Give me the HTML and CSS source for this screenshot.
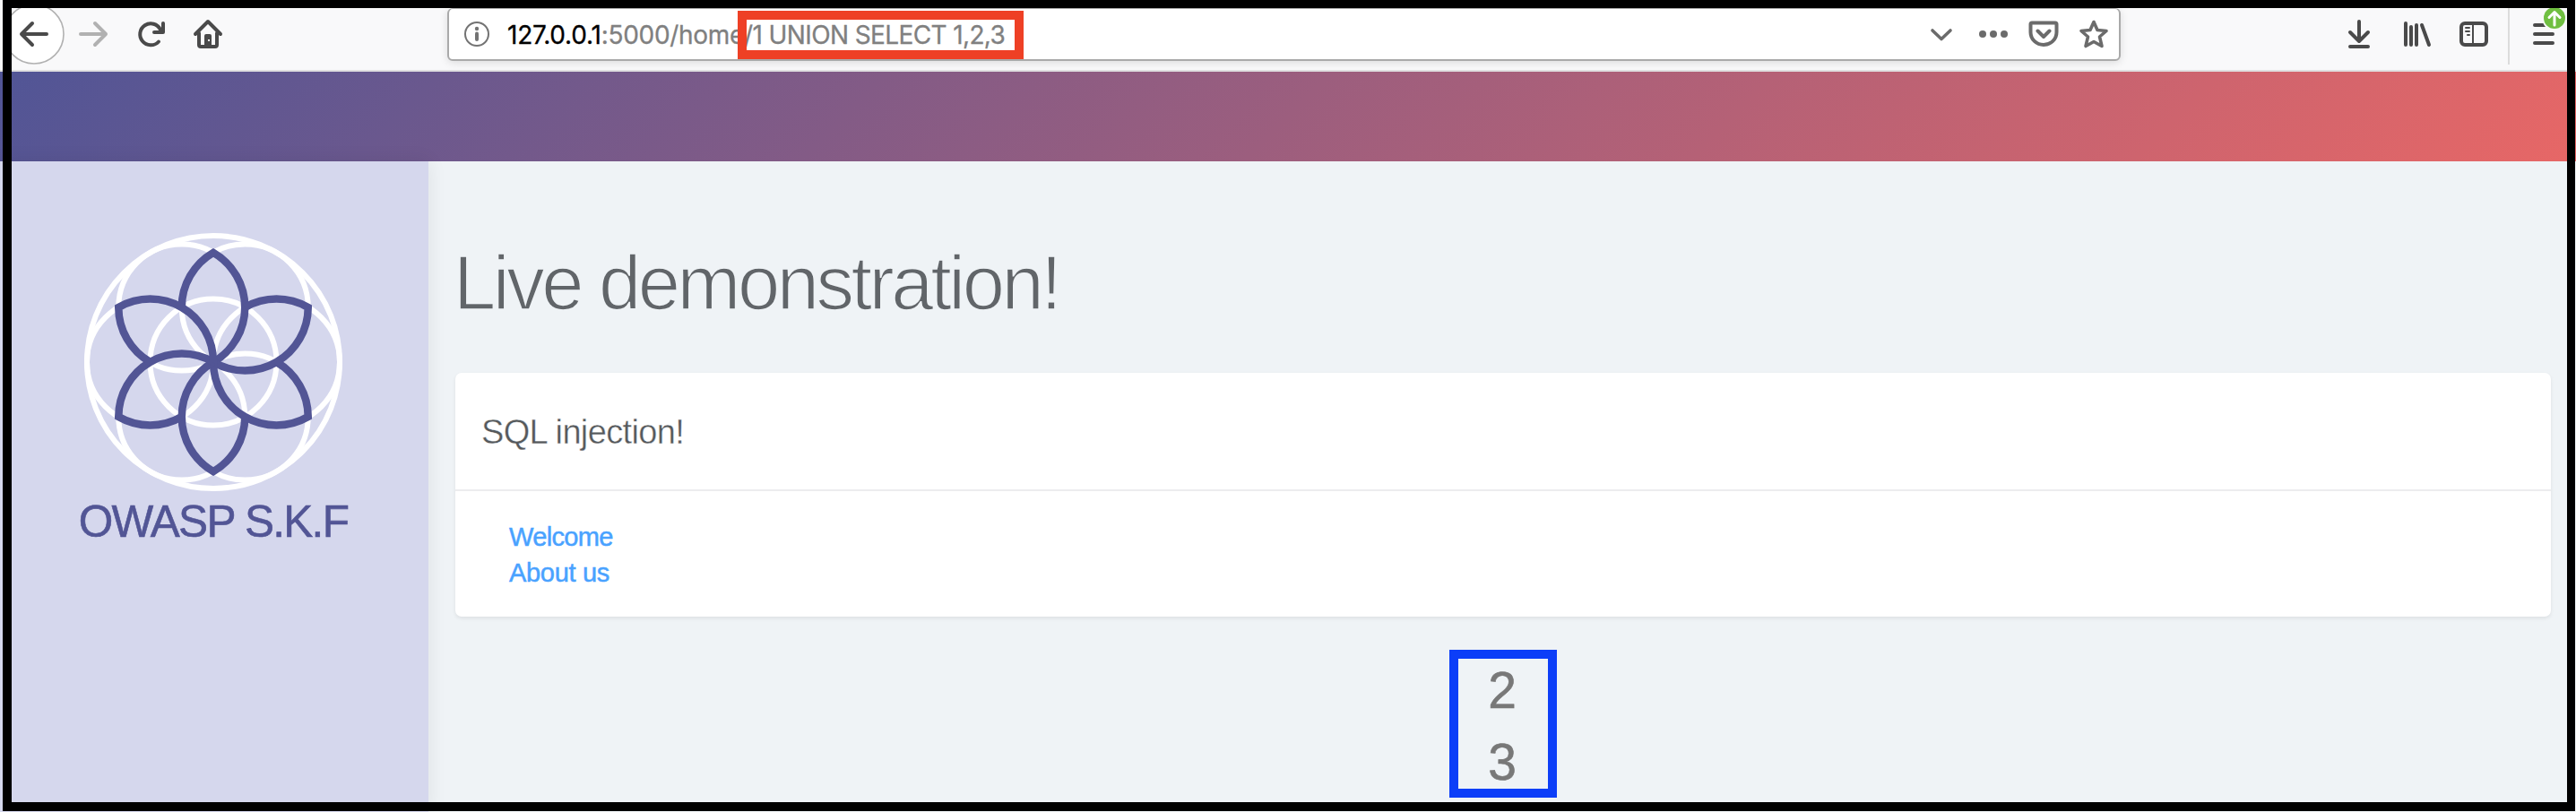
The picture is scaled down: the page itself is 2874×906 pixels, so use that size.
FILE: index.html
```html
<!DOCTYPE html>
<html lang="en">
<head>
<meta charset="utf-8">
<title>OWASP S.K.F</title>
<link rel="stylesheet" href="styles.css">
</head>
<body>
<div class="toolbar">
  <svg class="nav-icons" width="499" height="69" viewBox="0 9 499 69" fill="none" stroke-linecap="round" stroke-linejoin="round">
    <circle cx="38" cy="38" r="33" fill="#fff" stroke="#b1b1b1" stroke-width="1.6"/>
    <path d="M52 38H24M36 26L24 38L36 50" stroke="#4a4a4a" stroke-width="4"/>
    <path d="M90 38H118M106 26L118 38L106 50" stroke="#b1b1b1" stroke-width="4"/>
    <path d="M177 46.500A12 12 0 1 1 179 33M182 26V36H172" stroke="#4a4a4a" stroke-width="4"/>
    <path d="M218 38L232 24L246 38M222 37V50Q222 52 224 52H240Q242 52 242 50V37" stroke="#4a4a4a" stroke-width="4"/>
    <path d="M228 52V40Q228 38 230 38H234Q236 38 236 40V52Z" fill="#4a4a4a"/>
    <rect x="232" y="44" width="2" height="2" fill="#fff"/>
  </svg>
  <div class="urlbar">
    <svg class="info" width="30" height="30" viewBox="0 0 30 30"><circle cx="15" cy="15" r="13" fill="none" stroke="#737373" stroke-width="2"/><circle cx="15" cy="9" r="2.200" fill="#737373"/><path d="M15 14.500V21" stroke="#737373" stroke-width="4" stroke-linecap="round"/></svg>
    <div class="url"><span class="host">127.0.0.1</span><span class="path">:5000/home</span><span class="query">/1 UNION SELECT 1,2,3</span></div>
    <svg class="page-actions" width="208" height="58" viewBox="2150 9 208 58" fill="none" stroke="#6b6b6b" stroke-width="4" stroke-linecap="round" stroke-linejoin="round">
      <path d="M2156 34L2166 43.500L2176 34" stroke-width="3.600"/>
      <g fill="#6b6b6b" stroke="none"><circle cx="2212" cy="38" r="4"/><circle cx="2224" cy="38" r="4"/><circle cx="2236" cy="38" r="4"/></g>
      <path d="M2267 25.500H2293Q2294.500 25.500 2294.500 27V36A14.500 14 0 0 1 2265.500 36V27Q2265.500 25.500 2267 25.500ZM2273.500 34.500L2280 41L2286.500 34.500"/>
      <path d="M2336 24.500L2340 33.500L2350 34.500L2342.500 41L2345 51.500L2336 46.500L2327 51.500L2329.500 41L2322 34.500L2332 33.500Z" stroke-width="3.600"/>
    </svg>
  </div>
  <svg class="tools" width="264" height="69" viewBox="2600 9 264 69" fill="none" stroke="#4a4a4a" stroke-width="4" stroke-linecap="round" stroke-linejoin="round">
    <path d="M2632 24V46M2622 36L2632 46L2642 36M2622 52H2642"/>
    <path d="M2684 26V50M2690 30V50M2696 28V50M2702 28L2710 50" stroke-width="4"/>
    <rect x="2746" y="26" width="28" height="24" rx="4"/>
    <path d="M2759 26V50" stroke-width="2"/>
    <path d="M2751 31H2755M2751 35H2755M2753 39H2755" stroke-width="2"/>
    <path d="M2799 9V72" stroke="#dcdcdc" stroke-width="2" stroke-linecap="butt"/>
    <path d="M2828 28H2848M2828 38H2848M2828 48H2848"/>
    <circle cx="2850" cy="20" r="14" fill="#f9f9fa" stroke="none"/>
    <circle cx="2850" cy="20" r="12" fill="#70bf41" stroke="none"/>
    <path d="M2850 28V14M2844 19.500L2850 13.500L2856 19.500" stroke="#fff" stroke-width="3"/>
  </svg>
</div>
<header class="banner"></header>
<div class="layout">
  <aside class="sidebar">
    <svg class="logo" width="288" height="288" viewBox="-144 -144 288 288" fill="none">
      <g stroke="#fff" stroke-width="6">
        <circle r="141"/>
        <circle r="70.500"/>
        <circle cx="70.500" r="70.500"/>
        <circle cx="-70.500" r="70.500"/>
        <circle cx="35.250" cy="-61.050" r="70.500"/>
        <circle cx="-35.250" cy="-61.050" r="70.500"/>
        <circle cx="35.250" cy="61.050" r="70.500"/>
        <circle cx="-35.250" cy="61.050" r="70.500"/>
      </g>
      <defs><path id="petal" d="M-35.250 -61.050A70.500 70.500 0 0 1 0 -122.110A70.500 70.500 0 0 1 0 0"/></defs>
      <g stroke="#525595" stroke-width="8.500">
        <use href="#petal"/>
        <use href="#petal" transform="rotate(60)"/>
        <use href="#petal" transform="rotate(120)"/>
        <use href="#petal" transform="rotate(180)"/>
        <use href="#petal" transform="rotate(240)"/>
        <use href="#petal" transform="rotate(300)"/>
      </g>
    </svg>
    <div class="brand">OWASP S.K.F</div>
  </aside>
  <main class="content">
    <h1 class="title"><span>Live demonstration!</span></h1>
    <section class="card">
      <h2 class="card-head"><span>SQL injection!</span></h2>
      <nav class="links"><a class="welcome">Welcome</a><a class="about">About us</a></nav>
    </section>
    <div class="result"><span>2</span><span>3</span></div>
  </main>
</div>
<div class="mark-url"></div>
<div class="frame"></div>
</body>
</html>
```
FILE: styles.css
```css
* { box-sizing: border-box; }
body { margin: 0; width: 2874px; height: 906px; overflow: hidden; position: relative; background: #eff3f6; font-family: "Liberation Sans", Arial, sans-serif; }
.toolbar { height: 80px; padding-top: 9px; display: flex; align-items: flex-start; background: #f9f9fa; border-bottom: 2px solid #e0e0e1; }
.toolbar svg { display: block; flex: none; }
.urlbar { width: 1867px; height: 59px; display: flex; align-items: flex-start; background: #fff; border: 2px solid #a9a9a9; border-top-width: 1px; border-radius: 6px; box-shadow: 0 2px 10px rgba(0,0,0,.12); }
.info { margin: 13px 0 0 16px; }
.url { margin: 12px 0 0 19px; width: 1602px; flex: none; white-space: nowrap; font: 28px/34px Inter, sans-serif; color: #808080; -webkit-text-stroke: .3px; }
.host { color: #000; letter-spacing: -.2px; }
.path { letter-spacing: -.3px; }
.query { letter-spacing: -.62px; }
.page-actions { margin-left: -18px; margin-top: -1px; }
.tools { margin-left: 234px; }
.banner { height: 100px; background: linear-gradient(135deg, #515596 0%, #e76766 100%); }
.layout { height: 726px; display: flex; }
.sidebar { width: 478px; flex: none; background: #d5d7ed; display: flex; flex-direction: column; align-items: center; padding-top: 80px; padding-right: 2px; box-shadow: 0 0 20px rgba(0,0,0,.08); }
.logo { display: block; }
.brand { margin-top: 5px; font-size: 49.5px; line-height: 58px; letter-spacing: -1.7px; color: #525595; -webkit-text-stroke: .6px #525595; white-space: nowrap; }
.content { flex: 1; display: flex; flex-direction: column; padding: 88px 28px 0 30px; }
.title { margin: 0 0 0 -2px; height: 148px; font-size: 85px; line-height: 96px; letter-spacing: -3.5px; font-weight: 400; color: #616569; -webkit-text-stroke: 1.700px #eff3f6; white-space: nowrap; }
.card { height: 272px; background: #fff; border-radius: 7px; box-shadow: 0 2px 4px rgba(0,0,0,.08); }
.card-head { margin: 0; height: 132px; padding: 44px 29px 0; border-bottom: 2px solid #ececee; font-size: 38px; line-height: 44px; letter-spacing: -.65px; font-weight: 400; color: #55595c; -webkit-text-stroke: .4px #fff; }
.links { padding: 31px 60px; display: flex; flex-direction: column; align-items: flex-start; font-size: 29px; line-height: 40px; letter-spacing: -.65px; color: #49a2ff; -webkit-text-stroke: .5px #49a2ff; }
.about { letter-spacing: -.3px; }
.result { align-self: flex-start; margin: 37px 0 0 1109px; width: 120px; height: 165px; border: 10px solid #0c3ef8; padding-right: 2px; display: flex; flex-direction: column; align-items: center; font-size: 57px; line-height: 80px; color: #787878; -webkit-text-stroke: .6px #787878; }
.result span { height: 80px; margin-top: -5px; margin-bottom: 5px; }
.mark-url { position: absolute; left: 823px; top: 12px; width: 319px; height: 54px; border: 10px solid #ee4025; }
.frame { position: absolute; left: 3px; top: 0; width: 2870px; height: 905px; border: 10px solid #000; border-width: 9px 9px 10px 10px; }
```
